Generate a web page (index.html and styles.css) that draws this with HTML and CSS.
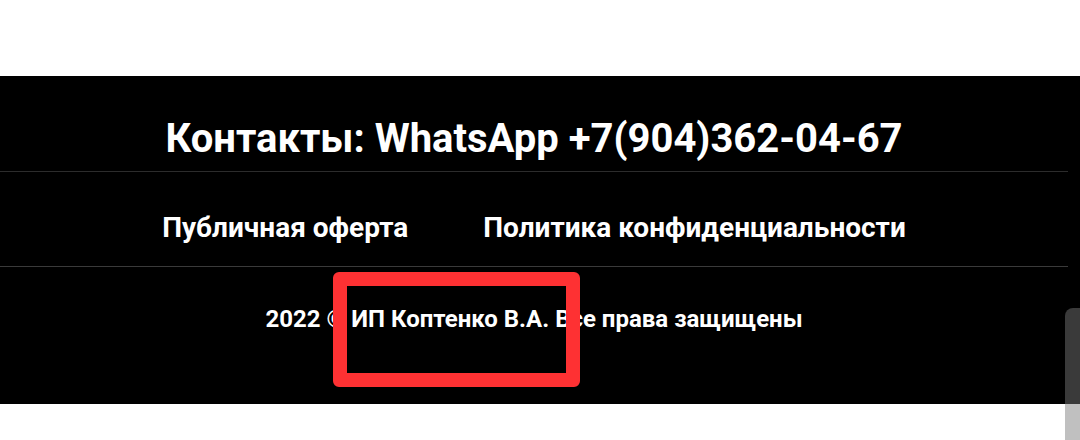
FILE: index.html
```html
<!DOCTYPE html>
<html lang="ru">
<head>
<meta charset="utf-8">
<title>Контакты</title>
<link rel="stylesheet" href="styles.css">
</head>
<body>
<div class="top"></div>
<footer class="footer">
  <div class="row row-contacts">
    <h2 class="contacts">Контакты: WhatsApp +7(904)362-04-67</h2>
  </div>
  <div class="row row-links">
    <a class="link" href="#">Публичная оферта</a>
    <a class="link" href="#">Политика конфиденциальности</a>
  </div>
  <div class="row row-copy">
    <p class="copy">2022 © ИП Коптенко В.А. Все права защищены</p>
  </div>
</footer>
<div class="mark"></div>
<div class="scrollbar"></div>
</body>
</html>
```

FILE: styles.css
```css
html, body {
  margin: 0;
  padding: 0;
  background: #fff;
  height: 100%;
  overflow: hidden;
}
body {
  font-family: Roboto, "Liberation Sans", Arial, sans-serif;
  color: #fff;
}
.top {
  height: 76px;
}
.footer {
  background: #000;
  height: 328px;
  box-sizing: border-box;
  padding-right: 12px;
  display: flex;
  flex-direction: column;
}
.row {
  display: flex;
  justify-content: center;
  box-sizing: border-box;
}
.row-contacts {
  height: 96px;
  padding-top: 43px;
  border-bottom: 1px solid #2c2c2c;
}
.contacts {
  margin: 0;
  font-size: 40px;
  line-height: 40px;
  font-weight: 700;
  white-space: nowrap;
}
.row-links {
  height: 95px;
  padding-top: 42px;
  gap: 75px;
  border-bottom: 1px solid #3a3a3a;
}
.link {
  color: #fff;
  text-decoration: none;
  font-size: 28px;
  line-height: 28px;
  font-weight: 700;
  white-space: nowrap;
}
.row-copy {
  padding-top: 40px;
}
.copy {
  margin: 0;
  font-size: 24px;
  line-height: 24px;
  font-weight: 700;
  white-space: nowrap;
}
.mark {
  position: absolute;
  left: 333px;
  top: 272px;
  width: 247px;
  height: 115px;
  box-sizing: border-box;
  border: 14px solid #fe3133;
  border-radius: 6px;
}
.scrollbar {
  position: absolute;
  left: 1065px;
  top: 308px;
  width: 15px;
  height: 132px;
  border-radius: 8px 0 0 0;
  background: rgba(122, 122, 122, 0.475);
}
```
